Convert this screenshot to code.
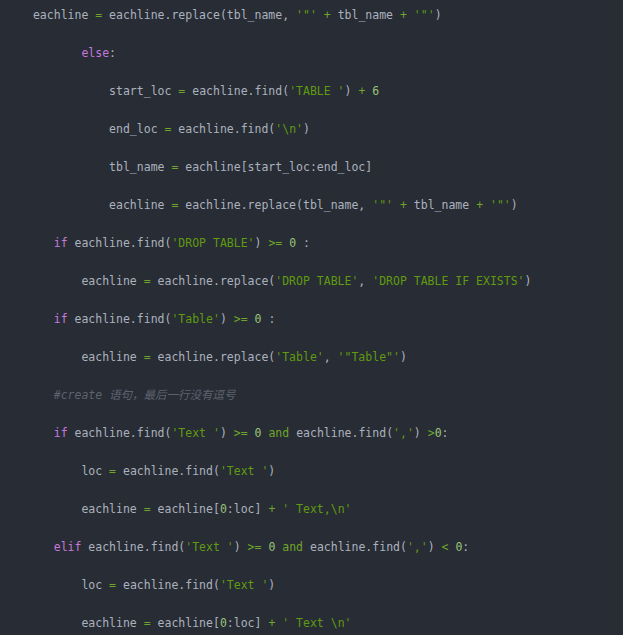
const lines: [number, string][] = [
  [1, `eachline = eachline.replace(tbl_name, '"' + tbl_name + '"')`],
  [8, `else:`],
  [12, `start_loc = eachline.find('TABLE ') + 6`],
  [12, `end_loc = eachline.find('\\n')`],
  [12, `tbl_name = eachline[start_loc:end_loc]`],
  [12, `eachline = eachline.replace(tbl_name, '"' + tbl_name + '"')`],
  [4, `if eachline.find('DROP TABLE') >= 0 :`],
  [8, `eachline = eachline.replace('DROP TABLE', 'DROP TABLE IF EXISTS')`],
  [4, `if eachline.find('Table') >= 0 :`],
  [8, `eachline = eachline.replace('Table', '"Table"')`],
  [4, `#create 语句，最后一行没有逗号`],
  [4, `if eachline.find('Text ') >= 0 and eachline.find(',') >0:`],
  [8, `loc = eachline.find('Text ')`],
  [8, `eachline = eachline[0:loc] + ' Text,\\n'`],
  [4, `elif eachline.find('Text ') >= 0 and eachline.find(',') < 0:`],
  [8, `loc = eachline.find('Text ')`],
  [8, `eachline = eachline[0:loc] + ' Text \\n'`],
];

const tokenRe = /('[^']*'|#.*$|\b(?:if|elif|else)\b|\band\b|>=|[=+<>]|\b\d+\b)/;

function Code({ text }: { text: string }) {
  const parts = text.split(tokenRe).filter((p) => p !== '' && p !== undefined);
  return (
    <>
      {parts.map((p, i) => {
        if (p.startsWith("'")) return <span key={i} className="text-[#5f9b12]">{p}</span>;
        if (p.startsWith('#'))
          return (
            <span key={i} className="italic text-[#5c6370]">
              {p}
            </span>
          );
        if (p === 'if' || p === 'elif' || p === 'else')
          return <span key={i} className="text-[#c678dd]">{p}</span>;
        if (p === 'and' || /^(>=|[=+<>])$/.test(p))
          return <span key={i} className="text-[#6fa52a]">{p}</span>;
        if (/^\d+$/.test(p)) return <span key={i} className="text-[#98c379]">{p}</span>;
        return <span key={i}>{p}</span>;
      })}
    </>
  );
}

export default function App() {
  return (
    <div className="w-[623px] h-[635px] overflow-hidden bg-[#282c34]">
      <pre className="pl-[26px] pt-[5.5px] text-[11.5px] leading-[19px] text-[#abb2bf] font-['DejaVu_Sans_Mono','Noto_Sans_CJK_SC',monospace]">
        {lines.map(([indent, text], i) => (
          <div key={i} className="mb-[19px] whitespace-pre">
            {' '.repeat(indent)}
            <Code text={text} />
          </div>
        ))}
      </pre>
    </div>
  );
}
